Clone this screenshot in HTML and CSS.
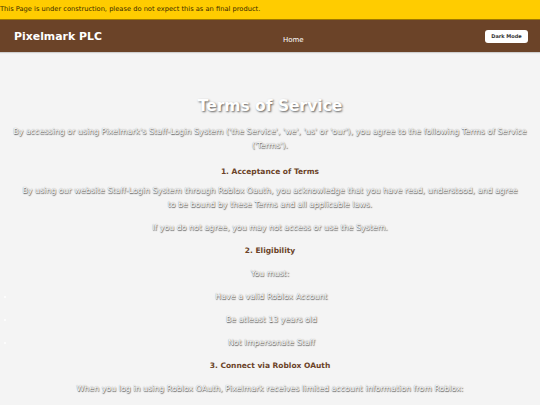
FILE: index.html
```html
<!DOCTYPE html>
<html>
<head>
<meta charset="utf-8">
<link rel="stylesheet" href="styles.css">
</head>
<body>
<div class="banner">This Page is under construction, please do not expect this as an final product.</div>
<nav class="nav">
  <div class="brand">Pixelmark PLC</div>
  <div class="links"><a class="link">Home</a></div>
  <button class="mode">Dark Mode</button>
</nav>
<main class="content">
  <h1 class="title">Terms of Service</h1>
  <p class="text intro">By accessing or using Pixelmark's Staff-Login System ('the Service', 'we', 'us' or 'our'), you agree to the following Terms of Service ('Terms').</p>
  <h2 class="heading first">1. Acceptance of Terms</h2>
  <p class="text wide">By using our website Staff-Login System through Roblox Oauth, you acknowledge that you have read, understood, and agree to be bound by these Terms and all applicable laws.</p>
  <p class="text">If you do not agree, you may not access or use the System.</p>
  <h2 class="heading">2. Eligibility</h2>
  <p class="text">You must:</p>
  <ul class="list">
    <li>Have a valid Roblox Account</li>
    <li>Be atleast 13 years old</li>
    <li>Not Impersonate Staff</li>
  </ul>
  <h2 class="heading">3. Connect via Roblox OAuth</h2>
  <p class="text">When you log in using Roblox OAuth, Pixelmark receives limited account information from Roblox:</p>
</main>
</body>
</html>
```
FILE: styles.css
```css
* { box-sizing: border-box; }
body {
  margin: 0;
  background: #f4f4f4;
  font-family: "DejaVu Sans", "Noto Sans", sans-serif;
  width: 540px;
  height: 405px;
  overflow: hidden;
}
.banner {
  background: #ffcc00;
  color: #3a2a00;
  font-size: 6.7px;
  height: 20px;
  line-height: 18px;
  border-bottom: 1px solid #a07800;
  white-space: nowrap;
}
.nav {
  background: #6b4328;
  height: 32px;
  display: flex;
  align-items: center;
  padding: 0 12px 0 14px;
  box-shadow: 0 1px 1px rgba(0,0,0,0.15);
}
.brand {
  color: #fff;
  font-weight: bold;
  font-size: 10.9px;
  width: 269px;
}
.links { flex: 1; }
.link { color: #fff; font-size: 7px; }
.mode {
  background: #fff;
  border: none;
  border-radius: 3px;
  font-family: inherit;
  font-size: 5px;
  color: #333;
  padding: 0;
  width: 43px;
  height: 13px;
  font-weight: bold;
}
.content {
  text-align: center;
  padding: 42px 12px 0;
}
.title {
  margin: 0 0 7px;
  font-size: 15.5px;
  color: #fff;
  text-shadow: 1px 1px 2px rgba(0,0,0,0.6);
  line-height: 24px;
}
.text {
  color: #fff;
  font-size: 7.9px;
  line-height: 14px;
  margin: 0 0 9px;
  text-shadow: 0.5px 0.5px 1px #555, 0 0 1px #888;
}
.intro { margin-bottom: 12px; }
.wide { padding: 0 9px; }
.heading {
  color: #6b4328;
  font-size: 7.5px;
  margin: 0 0 9px;
  line-height: 14px;
}
.heading.first { margin-bottom: 5px; }
.list {
  margin: 0 0 9px;
  padding: 0 0 0 3px;
  color: #fff;
  font-size: 7.9px;
  line-height: 14px;
  text-shadow: 0.5px 0.5px 1px #555, 0 0 1px #888;
}
.list li { margin-bottom: 9px; }
```
